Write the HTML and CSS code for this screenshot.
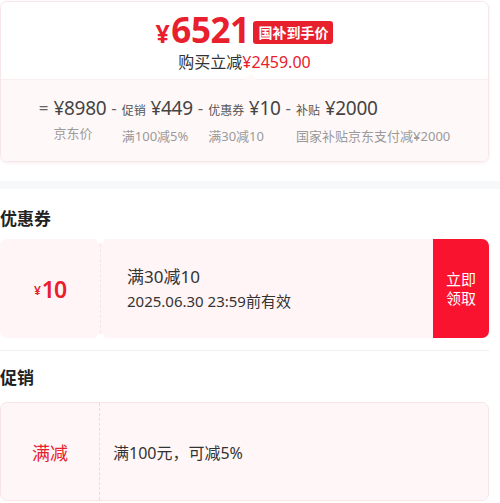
FILE: index.html
```html
<!DOCTYPE html>
<html>
<head>
    <meta charset="utf-8">
    <title>优惠详情</title>
    <link rel="stylesheet" href="styles.css">
</head>
<body>
    <div class="page">
        <div class="price-card">
            <div class="price-top">
                <div class="final-line">
                    <span class="final-price"><span class="yen">¥</span>6521</span>
                    <span class="final-tag">国补到手价</span>
                </div>
                <div class="save-line">购买立减<span class="save-num">¥2459.00</span></div>
            </div>
            <div class="price-bottom">
                <div class="formula">
                    <span class="op">=</span>
                    <div class="term">
                        <div class="term-main">¥8980</div>
                        <div class="term-sub">京东价</div>
                    </div>
                    <span class="op">-</span>
                    <div class="term">
                        <div class="term-main"><small>促销</small> ¥449</div>
                        <div class="term-sub">满100减5%</div>
                    </div>
                    <span class="op">-</span>
                    <div class="term">
                        <div class="term-main"><small>优惠券</small> ¥10</div>
                        <div class="term-sub">满30减10</div>
                    </div>
                    <span class="op">-</span>
                    <div class="term">
                        <div class="term-main"><small>补贴</small> ¥2000</div>
                        <div class="term-sub">国家补贴京东支付减¥2000</div>
                    </div>
                </div>
            </div>
        </div>

        <div class="band"></div>

        <h2 class="section-title">优惠券</h2>
        <div class="coupon">
            <div class="coupon-left"><span class="yen-s">¥</span>10</div>
            <div class="coupon-body">
                <div class="coupon-name">满30减10</div>
                <div class="coupon-date">2025.06.30 23:59前有效</div>
            </div>
            <div class="coupon-btn">立即<br>领取</div>
        </div>

        <div class="divider"></div>

        <h2 class="section-title promo-title">促销</h2>
        <div class="promo">
            <div class="promo-left">满减</div>
            <div class="promo-body">满100元，可减5%</div>
        </div>
    </div>
</body>
</html>
```

FILE: styles.css
```css
body {
    margin: 0;
    padding: 0;
    background-color: #fff;
    font-family: "Noto Sans", "Noto Sans CJK SC", sans-serif;
    color: #333;
}

.page {
    width: 489px;
}

/* 价格卡片 */
.price-card {
    margin-top: 1px;
    border: 1px solid #f7e7e9;
    border-radius: 7px;
    overflow: hidden;
    box-shadow: 0 1px 3px rgba(230, 200, 205, 0.35);
}

.price-top {
    background-color: #fff;
    height: 77px;
    text-align: center;
    box-sizing: border-box;
    padding-top: 10px;
}

.final-line {
    display: flex;
    justify-content: center;
    align-items: center;
    gap: 4px;
    height: 38px;
}

.final-price {
    color: #e8202e;
    font-size: 35px;
    font-weight: 700;
    line-height: 38px;
    letter-spacing: -0.5px;
}

.final-price .yen {
    font-size: 25px;
    margin-right: 2px;
}

.final-tag {
    background-color: #e8202e;
    color: #fff;
    font-size: 14px;
    font-weight: 700;
    line-height: 23px;
    padding: 0 5px;
    border-radius: 3px;
    margin-top: 2px;
}

.save-line {
    font-size: 16px;
    line-height: 22px;
    color: #333;
    margin-top: 1px;
}

.save-num {
    color: #e8202e;
}

.price-bottom {
    position: relative;
    background-color: #fff8f8;
    border-top: 1px solid #fbeeee;
    height: 82px;
    display: flex;
    justify-content: center;
    padding-top: 15px;
    box-sizing: border-box;
}

/* 小三角 */
.price-bottom::before {
    content: "";
    position: absolute;
    top: -6px;
    left: 244px;
    border-left: 6px solid transparent;
    border-right: 6px solid transparent;
    border-bottom: 6px solid #fff8f8;
}

.formula {
    display: flex;
    align-items: flex-start;
    gap: 5px;
}

.op {
    font-size: 17px;
    line-height: 26px;
    color: #666;
}

.term-main {
    font-size: 19px;
    line-height: 26px;
    color: #444;
    white-space: nowrap;
    letter-spacing: -0.3px;
}

.term-main small {
    font-size: 12px;
    color: #555;
    letter-spacing: 0;
}

.term-sub {
    margin-top: 3px;
    font-size: 13px;
    line-height: 18px;
    color: #9a9a9a;
    white-space: nowrap;
}

.band {
    margin-top: 19px;
    width: 500px;
    height: 8px;
    background-color: #f7f8fa;
}

.section-title {
    margin: 0;
    padding-top: 18px;
    font-size: 17px;
    font-weight: 700;
    line-height: 24px;
    color: #222;
}

.promo-title {
    padding-top: 15px;
}

/* 优惠券 */
.coupon {
    margin-top: 8px;
    height: 99px;
    display: flex;
    background-color: #fff5f6;
    border-radius: 7px;
}

.coupon-left {
    position: relative;
    width: 100px;
    display: flex;
    justify-content: center;
    align-items: center;
    color: #e8202e;
    font-size: 23px;
    font-weight: 600;
    letter-spacing: -1px;
    border-right: 1px dashed #f5e3e5;
}

.coupon-left::before,
.coupon-left::after {
    content: "";
    position: absolute;
    right: -5px;
    width: 9px;
    height: 9px;
    border-radius: 50%;
    background-color: #fff;
}

.coupon-left::before {
    top: -5px;
}

.coupon-left::after {
    bottom: -5px;
}

.yen-s {
    font-size: 12px;
    margin-top: 4px;
    margin-right: 2px;
}

.coupon-body {
    flex: 1;
    padding-left: 26px;
    display: flex;
    flex-direction: column;
    justify-content: center;
    gap: 2px;
}

.coupon-name {
    font-size: 17px;
    line-height: 23px;
    color: #333;
}

.coupon-date {
    font-size: 15px;
    line-height: 22px;
    color: #333;
}

.coupon-btn {
    width: 56px;
    background-color: #f9132e;
    color: #fff;
    font-size: 15px;
    line-height: 19px;
    display: flex;
    align-items: center;
    justify-content: center;
    text-align: center;
    border-radius: 0 7px 7px 0;
}

.divider {
    margin-top: 12px;
    height: 1px;
    background-color: #f0f0f0;
}

/* 促销 */
.promo {
    margin-top: 12px;
    height: 99px;
    display: flex;
    box-sizing: border-box;
    background-color: #fff7f7;
    border: 1px solid #f7e6e8;
    border-radius: 7px;
}

.promo-left {
    width: 98px;
    display: flex;
    justify-content: center;
    align-items: center;
    color: #e8202e;
    font-size: 18px;
    border-right: 1px dashed #eadcdd;
}

.promo-body {
    display: flex;
    align-items: center;
    padding-left: 13px;
    font-size: 16px;
    color: #333;
}
```
